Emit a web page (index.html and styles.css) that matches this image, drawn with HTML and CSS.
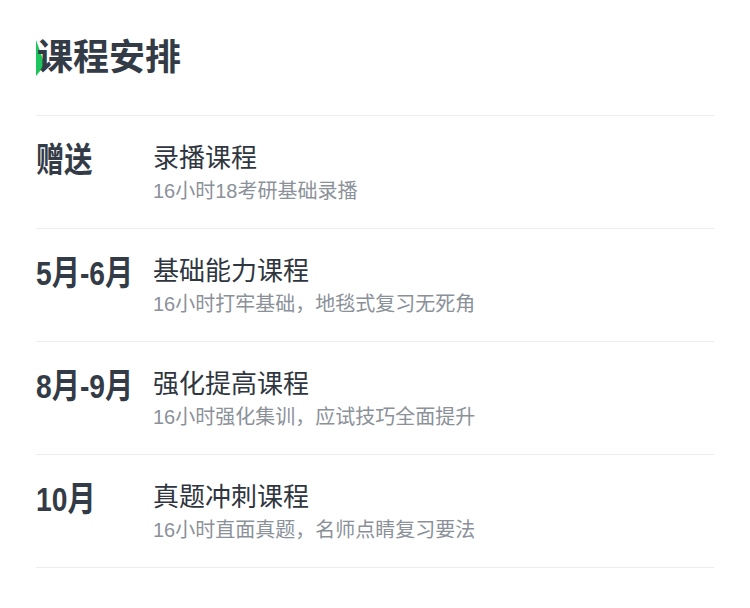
FILE: index.html
```html
<!DOCTYPE html>
<html lang="zh-CN">
<head>
<meta charset="utf-8">
<title>课程安排</title>
<link rel="stylesheet" href="styles.css">
</head>
<body>
<section class="schedule">
  <h2 class="schedule-title">课程安排</h2>
  <ul class="schedule-list">
    <li class="schedule-row">
      <div class="row-label"><span class="label-text">赠送</span></div>
      <div class="row-body">
        <div class="row-title">录播课程</div>
        <div class="row-desc">16小时18考研基础录播</div>
      </div>
    </li>
    <li class="schedule-row">
      <div class="row-label"><span class="label-text">5月-6月</span></div>
      <div class="row-body">
        <div class="row-title">基础能力课程</div>
        <div class="row-desc">16小时打牢基础，地毯式复习无死角</div>
      </div>
    </li>
    <li class="schedule-row">
      <div class="row-label"><span class="label-text">8月-9月</span></div>
      <div class="row-body">
        <div class="row-title">强化提高课程</div>
        <div class="row-desc">16小时强化集训，应试技巧全面提升</div>
      </div>
    </li>
    <li class="schedule-row">
      <div class="row-label"><span class="label-text">10月</span></div>
      <div class="row-body">
        <div class="row-title">真题冲刺课程</div>
        <div class="row-desc">16小时直面真题，名师点睛复习要法</div>
      </div>
    </li>
  </ul>
</section>
</body>
</html>
```
FILE: styles.css
```css
html, body {
  margin: 0;
  padding: 0;
  background: #ffffff;
}

body {
  font-family: "Liberation Sans", "Noto Sans CJK SC", sans-serif;
  color: #333b46;
}

.schedule {
  padding: 0 36px;
}

.schedule-title {
  position: relative;
  margin: 0;
  padding: 36px 0 43px 1px;
  font-family: "Noto Sans CJK SC", sans-serif;
  font-size: 36px;
  line-height: 36px;
  font-weight: 700;
  color: #333b46;
  border-bottom: 1px solid #ececec;
  z-index: 0;
}

.schedule-title::before {
  content: "";
  position: absolute;
  left: 0;
  top: 40px;
  width: 0;
  height: 0;
  border-left: 9px solid #1ec45c;
  border-top: 25px solid transparent;
  border-bottom: 11px solid transparent;
  z-index: -1;
}

.schedule-list {
  list-style: none;
  margin: 0;
  padding: 0;
}

.schedule-row {
  display: flex;
  align-items: flex-start;
  padding: 26px 0 27px;
  border-bottom: 1px solid #ececec;
}

.row-label {
  width: 117px;
  flex-shrink: 0;
  margin-top: 1px;
  height: 34px;
}

.label-text {
  display: inline-block;
  font-size: 34px;
  line-height: 34px;
  font-weight: 700;
  color: #333b46;
  white-space: nowrap;
  transform: scaleX(0.83);
  transform-origin: left center;
}

.row-body {
  display: flex;
  flex-direction: column;
  gap: 10px;
  margin-top: 3px;
}

.row-title {
  font-size: 26px;
  line-height: 26px;
  color: #2f3640;
}

.row-desc {
  font-size: 20px;
  line-height: 20px;
  color: #8b9199;
}
```
